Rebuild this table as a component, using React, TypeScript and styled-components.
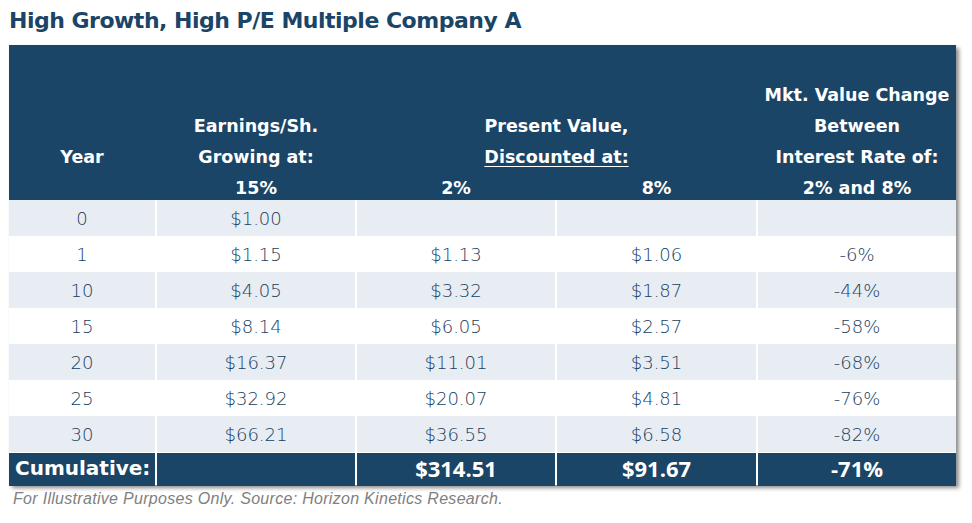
import React from 'react';
import styled, { createGlobalStyle } from 'styled-components';

const GlobalStyle = createGlobalStyle`
  html, body {
    margin: 0;
    padding: 0;
    background: #ffffff;
  }
`;

const NAVY = '#1b4567';
const LIGHT = '#e8ecf3';
const TEXT = '#17405f';
const COLS = '146px 198px 198px 199px 198px';

const Page = styled.div`
  width: 972px;
  height: 523px;
  overflow: hidden;
`;

const Title = styled.h1`
  margin: 0;
  height: 45px;
  padding: 6px 0 0 9px;
  box-sizing: border-box;
  font-family: 'DejaVu Sans', sans-serif;
  font-weight: bold;
  font-size: 22px;
  letter-spacing: -0.5px;
  line-height: 30px;
  color: ${NAVY};
`;

const Table = styled.div`
  margin-left: 9px;
  width: 947px;
  background: #ffffff;
  box-shadow: 3px 3px 4px rgba(0, 0, 0, 0.45);
`;

const Header = styled.div`
  display: grid;
  grid-template-columns: ${COLS};
  grid-template-rows: 35px 31px 31px 31px 27px;
  column-gap: 2px;
  background: ${NAVY};
  color: #ffffff;
  font-family: 'DejaVu Sans', sans-serif;
  font-weight: bold;
  font-size: 17.5px;
  line-height: 31px;
  text-align: center;
  white-space: nowrap;
`;

const HeadCell = styled.div<{ col: string; row: string }>`
  grid-column: ${p => p.col};
  grid-row: ${p => p.row};
  display: flex;
  flex-direction: column;
`;

const Underlined = styled.span`
  text-decoration: underline;
  text-underline-offset: 3px;
`;

const BodyRow = styled.div`
  display: grid;
  grid-template-columns: ${COLS};
  column-gap: 2px;
  height: 36px;
`;

const Cell = styled.div<{ shaded: boolean }>`
  display: flex;
  align-items: center;
  justify-content: center;
  background: ${p => (p.shaded ? LIGHT : '#ffffff')};
  color: ${TEXT};
  font-family: 'DejaVu Sans', sans-serif;
  font-weight: 200;
  font-size: 18px;
`;

const TotalRow = styled.div`
  display: grid;
  grid-template-columns: ${COLS};
  column-gap: 2px;
  height: 32px;
  border-top: 1px solid #ffffff;
`;

const TotalCell = styled.div<{ align?: string }>`
  display: flex;
  align-items: center;
  justify-content: ${p => p.align || 'center'};
  padding: 0 0 3px ${p => (p.align ? '6px' : '0')};
  background: ${NAVY};
  color: #ffffff;
  font-family: 'Open Sans', sans-serif;
  font-weight: bold;
  font-size: 22px;
`;

const TotalLabel = styled.span`
  font-family: 'DejaVu Sans', sans-serif;
  font-size: 20px;
`;

const Footnote = styled.div`
  margin: 5px 0 0 13px;
  font-family: 'Liberation Sans', sans-serif;
  font-style: italic;
  font-size: 16px;
  letter-spacing: 0.3px;
  line-height: 18px;
  color: #808080;
`;

const rows = [
  ['0', '$1.00', '', '', ''],
  ['1', '$1.15', '$1.13', '$1.06', '-6%'],
  ['10', '$4.05', '$3.32', '$1.87', '-44%'],
  ['15', '$8.14', '$6.05', '$2.57', '-58%'],
  ['20', '$16.37', '$11.01', '$3.51', '-68%'],
  ['25', '$32.92', '$20.07', '$4.81', '-76%'],
  ['30', '$66.21', '$36.55', '$6.58', '-82%'],
];

const App: React.FC = () => {
  return (
    <Page>
      <GlobalStyle />
      <Title>High Growth, High P/E Multiple Company A</Title>
      <Table>
        <Header>
          <HeadCell col="1" row="4">
            <span>Year</span>
          </HeadCell>
          <HeadCell col="2" row="3 / 6">
            <span>Earnings/Sh.</span>
            <span>Growing at:</span>
            <span>15%</span>
          </HeadCell>
          <HeadCell col="3 / 5" row="3 / 5">
            <span>Present Value,</span>
            <span><Underlined>Discounted at:</Underlined></span>
          </HeadCell>
          <HeadCell col="3" row="5">
            <span>2%</span>
          </HeadCell>
          <HeadCell col="4" row="5">
            <span>8%</span>
          </HeadCell>
          <HeadCell col="5" row="2 / 6">
            <span>Mkt. Value Change</span>
            <span>Between</span>
            <span>Interest Rate of:</span>
            <span>2% and 8%</span>
          </HeadCell>
        </Header>
        {rows.map((r, i) => (
          <BodyRow key={i}>
            {r.map((v, j) => (
              <Cell key={j} shaded={i % 2 === 0}>{v}</Cell>
            ))}
          </BodyRow>
        ))}
        <TotalRow>
          <TotalCell align="flex-start"><TotalLabel>Cumulative:</TotalLabel></TotalCell>
          <TotalCell />
          <TotalCell>$314.51</TotalCell>
          <TotalCell>$91.67</TotalCell>
          <TotalCell>-71%</TotalCell>
        </TotalRow>
      </Table>
      <Footnote>For Illustrative Purposes Only. Source: Horizon Kinetics Research.</Footnote>
    </Page>
  );
};

export default App;
